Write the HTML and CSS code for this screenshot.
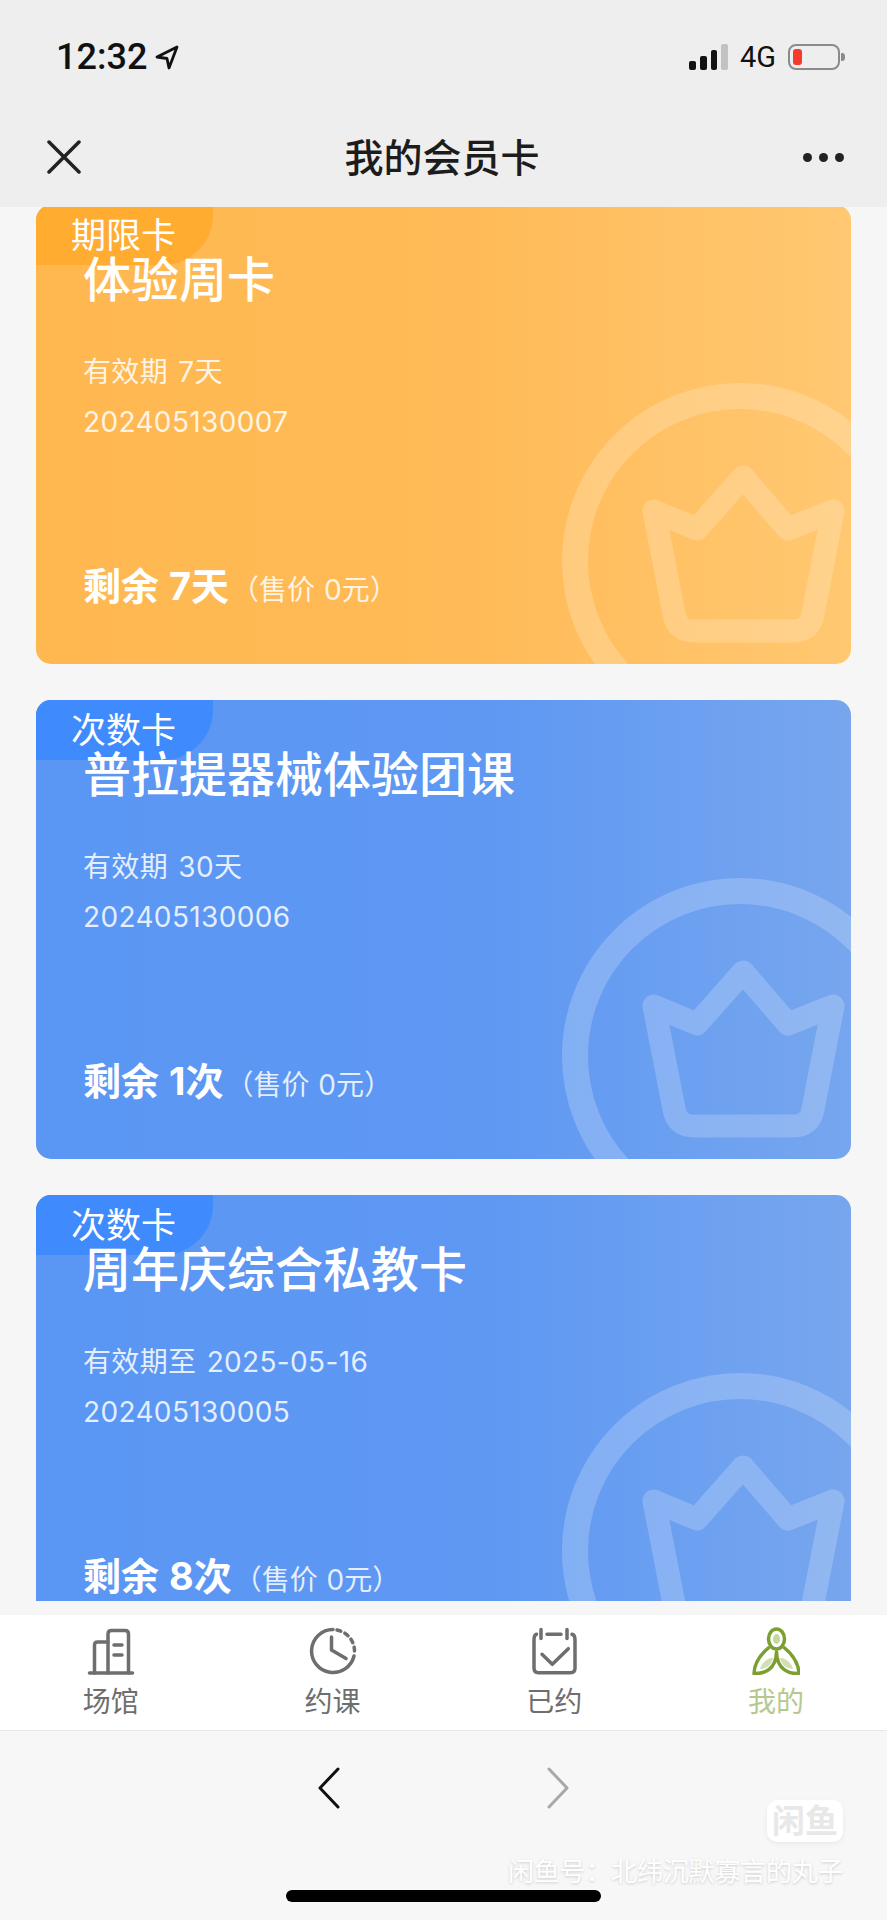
FILE: index.html
```html
<!DOCTYPE html>
<html lang="zh-CN">
<head>
    <meta charset="utf-8">
    <title>我的会员卡</title>
    <link rel="stylesheet" href="styles.css">
</head>
<body>
<div class="page">

    <header class="header">
        <div class="status-bar">
            <div class="status-left">
                <span class="time">12:32</span>
                <svg class="location" width="24" height="25" viewBox="0 0 24 25"><path d="M22 2 L2 12 L12 13.5 L14 23 Z" fill="none" stroke="#111" stroke-width="2.8" stroke-linejoin="round"/></svg>
            </div>
            <div class="status-right">
                <div class="signal">
                    <i class="bar bar-1"></i>
                    <i class="bar bar-2"></i>
                    <i class="bar bar-3"></i>
                    <i class="bar bar-4"></i>
                </div>
                <span class="network">4G</span>
                <div class="battery"><i class="battery-level"></i></div>
                <i class="battery-tip"></i>
            </div>
        </div>
        <div class="nav-bar">
            <svg class="nav-close" width="34" height="34" viewBox="0 0 34 34"><path d="M2 2 L32 32 M32 2 L2 32" stroke="#222" stroke-width="3.5" stroke-linecap="round"/></svg>
            <h1 class="nav-title">我的会员卡</h1>
            <div class="nav-more"><i></i><i></i><i></i></div>
        </div>
    </header>

    <main class="content">
        <div class="card-list">

            <section class="card card-orange">
                <span class="card-tag">期限卡</span>
                <h2 class="card-title">体验周卡</h2>
                <p class="card-line">有效期 7天</p>
                <p class="card-line">202405130007</p>
                <p class="card-left"><b>剩余 7天</b><span class="card-price">（售价 0元）</span></p>
                <svg class="card-crown" width="310" height="340" viewBox="0 0 310 340"><g fill="none" stroke="#fff" stroke-width="26" stroke-linejoin="round"><circle cx="199" cy="237" r="165"/><path stroke-width="23" d="M202 153 L156 205 L113 187 L133 290 Q136 307 153 307 H252 Q269 307 272 290 L292 187 L247 205 Z"/></g></svg>
            </section>

            <section class="card card-blue">
                <span class="card-tag">次数卡</span>
                <h2 class="card-title">普拉提器械体验团课</h2>
                <p class="card-line">有效期 30天</p>
                <p class="card-line">202405130006</p>
                <p class="card-left"><b>剩余 1次</b><span class="card-price">（售价 0元）</span></p>
                <svg class="card-crown" width="310" height="340" viewBox="0 0 310 340"><g fill="none" stroke="#fff" stroke-width="26" stroke-linejoin="round"><circle cx="199" cy="237" r="165"/><path stroke-width="23" d="M202 153 L156 205 L113 187 L133 290 Q136 307 153 307 H252 Q269 307 272 290 L292 187 L247 205 Z"/></g></svg>
            </section>

            <section class="card card-blue">
                <span class="card-tag">次数卡</span>
                <h2 class="card-title">周年庆综合私教卡</h2>
                <p class="card-line">有效期至 2025-05-16</p>
                <p class="card-line">202405130005</p>
                <p class="card-left"><b>剩余 8次</b><span class="card-price">（售价 0元）</span></p>
                <svg class="card-crown" width="310" height="340" viewBox="0 0 310 340"><g fill="none" stroke="#fff" stroke-width="26" stroke-linejoin="round"><circle cx="199" cy="237" r="165"/><path stroke-width="23" d="M202 153 L156 205 L113 187 L133 290 Q136 307 153 307 H252 Q269 307 272 290 L292 187 L247 205 Z"/></g></svg>
            </section>

        </div>
    </main>

    <nav class="tab-bar">
        <div class="tab">
            <svg width="48" height="48" viewBox="0 0 48 48" fill="none" stroke="#6e6e6e" stroke-width="3.5" stroke-linecap="round"><path d="M2.5 46 H45.5"/><path d="M21 46 V7 Q21 3.5 24.5 3.5 H38 Q41.5 3.5 41.5 7 V46"/><path d="M7.5 46 V18 Q7.5 15 10.5 15 H21"/><path d="M27 18 H35 M27 28 H35"/></svg>
            <span class="tab-label">场馆</span>
        </div>
        <div class="tab">
            <svg width="48" height="48" viewBox="0 0 48 48" fill="none" stroke="#6e6e6e" stroke-width="3.5" stroke-linecap="round" stroke-linejoin="round"><path d="M24 2.5 A21.5 21.5 0 1 0 45 29"/><path d="M28 3 A21.5 21.5 0 0 1 45.5 24" stroke-dasharray="4 4.5"/><path d="M22.5 10 V23 L37 31.5"/></svg>
            <span class="tab-label">约课</span>
        </div>
        <div class="tab">
            <svg width="48" height="48" viewBox="0 0 48 48" fill="none" stroke="#6e6e6e" stroke-width="3.5" stroke-linecap="round" stroke-linejoin="round"><path d="M4 13 V41 Q4 45.7 8.5 45.7 H40.5 Q45 45.7 45 41 V13 Q45 8 42 7.3 M6.5 7.3 Q4 8 4 13"/><path d="M11 2.5 V11.5 M37 2.5 V11.5 M17 7.3 H31"/><path d="M12 27.3 L22.3 37.3 L38.3 21.7"/></svg>
            <span class="tab-label">已约</span>
        </div>
        <div class="tab tab-active">
            <svg width="48" height="48" viewBox="0 0 48 48" fill="none" stroke="#7b9f30" stroke-width="3.5" stroke-linejoin="round"><ellipse cx="24.5" cy="12" rx="8" ry="10"/><ellipse cx="24.5" cy="12" rx="3.5" ry="5" fill="#c6d7a0" stroke="none"/><path d="M17.5 20 C10 26 2.5 34 2 46.5 C12 47 24 43 24.5 25 C25 43 37 47 47 46.5 C46.5 34 39 26 31.5 20"/><path d="M19 31 C14 32 9 37 8 42 C14 42 20 38 21 31 Z M30 31 C35 32 40 37 41 42 C35 42 29 38 28 31 Z" fill="#d3e0b6" stroke="none"/></svg>
            <span class="tab-label">我的</span>
        </div>
    </nav>

    <footer class="browser-bar">
        <div class="browser-arrows">
            <svg width="22" height="42" viewBox="0 0 22 42"><path d="M20 2 L2 21 L20 40" fill="none" stroke="#111" stroke-width="3" stroke-linecap="round" stroke-linejoin="round"/></svg>
            <svg width="22" height="42" viewBox="0 0 22 42"><path d="M2 2 L20 21 L2 40" fill="none" stroke="#a8a8a8" stroke-width="3" stroke-linecap="round" stroke-linejoin="round"/></svg>
        </div>
        <div class="home-indicator"></div>
    </footer>

    <div class="watermark-logo">闲鱼</div>
    <div class="watermark-text">闲鱼号：北纬沉默寡言的丸子</div>

</div>
</body>
</html>
```

FILE: styles.css
```css
* {
    box-sizing: border-box;
}

body {
    margin: 0;
    background-color: #f6f6f6;
    font-family: Inter, "Noto Sans CJK SC", sans-serif;
}

.page {
    position: relative;
    display: flex;
    flex-direction: column;
    width: 887px;
    height: 1920px;
    overflow: hidden;
}

/* status bar + title bar */
.header {
    height: 207px;
    background-color: #eeeeee;
}

.status-bar {
    display: flex;
    justify-content: space-between;
    align-items: center;
    height: 112px;
    padding: 2px 42px 0 56px;
}

.status-left {
    display: flex;
    align-items: center;
    gap: 8px;
}

.time {
    font-family: Roboto, sans-serif;
    font-size: 36px;
    font-weight: 500;
    line-height: 40px;
    color: #111;
}

.status-right {
    display: flex;
    align-items: center;
}

.signal {
    display: flex;
    align-items: flex-end;
    gap: 4px;
    height: 26px;
    margin-right: 12px;
}

.bar {
    width: 6.7px;
    border-radius: 2px;
    background-color: #111;
}

.bar-1 { height: 9px; }
.bar-2 { height: 14px; }
.bar-3 { height: 20px; }
.bar-4 { height: 26px; background-color: #c2c2c2; }

.network {
    font-family: Roboto, sans-serif;
    font-size: 29px;
    color: #111;
    margin-right: 12px;
}

.battery {
    width: 52px;
    height: 26px;
    padding: 3px;
    border: 2.5px solid #8b8b8b;
    border-radius: 8px;
}

.battery-level {
    display: block;
    width: 9px;
    height: 100%;
    border-radius: 3px;
    background-color: #f53b30;
}

.battery-tip {
    width: 4px;
    height: 8px;
    margin-left: 1px;
    border-radius: 0 3px 3px 0;
    background-color: #8b8b8b;
}

.nav-bar {
    display: flex;
    justify-content: space-between;
    align-items: center;
    height: 90px;
    padding: 0 43px 0 47px;
}

.nav-title {
    margin: -4px 0 0;
    font-size: 39px;
    font-weight: 500;
    color: #1c1c1c;
}

.nav-more {
    display: flex;
    gap: 7px;
}

.nav-more i {
    width: 9px;
    height: 9px;
    border-radius: 50%;
    background-color: #222;
}

/* cards */
.content {
    height: 1408px;
    padding-bottom: 14px;
}

.card-list {
    display: flex;
    flex-direction: column;
    gap: 36px;
    height: 100%;
    padding: 0 36px;
    overflow: hidden;
}

.card {
    position: relative;
    display: flex;
    flex-direction: column;
    flex-shrink: 0;
    height: 459px;
    padding: 47px 0 49px 47px;
    border-radius: 15px;
    overflow: hidden;
    color: #fff;
}

.card:first-child {
    margin-top: -2px;
}

.card-orange {
    background: linear-gradient(90deg, #ffb850, #ffbb58 55%, #ffc872);
}

.card-blue {
    background: linear-gradient(90deg, #5a96f3, #5e98f3 55%, #77a6ee);
}

.card-tag {
    position: absolute;
    top: 0;
    left: 0;
    width: 177px;
    height: 60px;
    padding: 8px 0 0 35px;
    border-radius: 0 0 50px 0;
    font-size: 35px;
    line-height: 44px;
}

.card-orange .card-tag {
    background-color: #ffac30;
}

.card-blue .card-tag {
    background-color: #3f8bfd;
}

.card-title {
    position: relative;
    margin: 0 0 39px;
    font-size: 48px;
    font-weight: 500;
    line-height: 56px;
}

.card-line {
    margin: 0;
    font-size: 28px;
    line-height: 50px;
    letter-spacing: 0.35px;
    word-spacing: 2px;
    color: rgba(255, 255, 255, 0.85);
}

.card-left {
    margin: auto 0 0;
    font-size: 38px;
    line-height: 50px;
    word-spacing: 1px;
}

.card-left b {
    font-weight: 700;
}

.card-price {
    margin-left: 2px;
    font-size: 28px;
    color: rgba(255, 255, 255, 0.85);
}

.card-crown {
    position: absolute;
    right: 0;
    bottom: 0;
    opacity: 0.2;
}

/* tabs */
.tab-bar {
    display: flex;
    height: 116px;
    padding-top: 12px;
    background-color: #fff;
    border-bottom: 1px solid #e9e9e9;
}

.tab {
    display: flex;
    flex: 1;
    flex-direction: column;
    align-items: center;
}

.tab-label {
    margin-top: 7px;
    font-size: 28px;
    line-height: 40px;
    color: #6e6e6e;
}

.tab-active .tab-label {
    color: #b6c98d;
}

/* bottom browser bar */
.browser-bar {
    display: flex;
    flex: 1;
    flex-direction: column;
    align-items: center;
    padding-top: 36px;
    background-color: #f7f7f7;
}

.browser-arrows {
    display: flex;
    gap: 207px;
}

.home-indicator {
    width: 315px;
    height: 12px;
    margin-top: 81px;
    border-radius: 6px;
    background-color: #000;
}

/* watermark over the page */
.watermark-logo {
    position: absolute;
    top: 1800px;
    left: 767px;
    width: 76px;
    height: 42px;
    border-radius: 10px;
    background-color: #fff;
    box-shadow: 0 2px 5px rgba(0, 0, 0, 0.06);
    font-size: 33px;
    font-weight: 700;
    line-height: 42px;
    text-align: center;
    color: #e8e8e8;
}

.watermark-text {
    position: absolute;
    top: 1854px;
    left: 508px;
    font-size: 26px;
    line-height: 36px;
    letter-spacing: -0.2px;
    color: #fff;
    text-shadow: 0 1px 3px rgba(0, 0, 0, 0.18);
}
```
